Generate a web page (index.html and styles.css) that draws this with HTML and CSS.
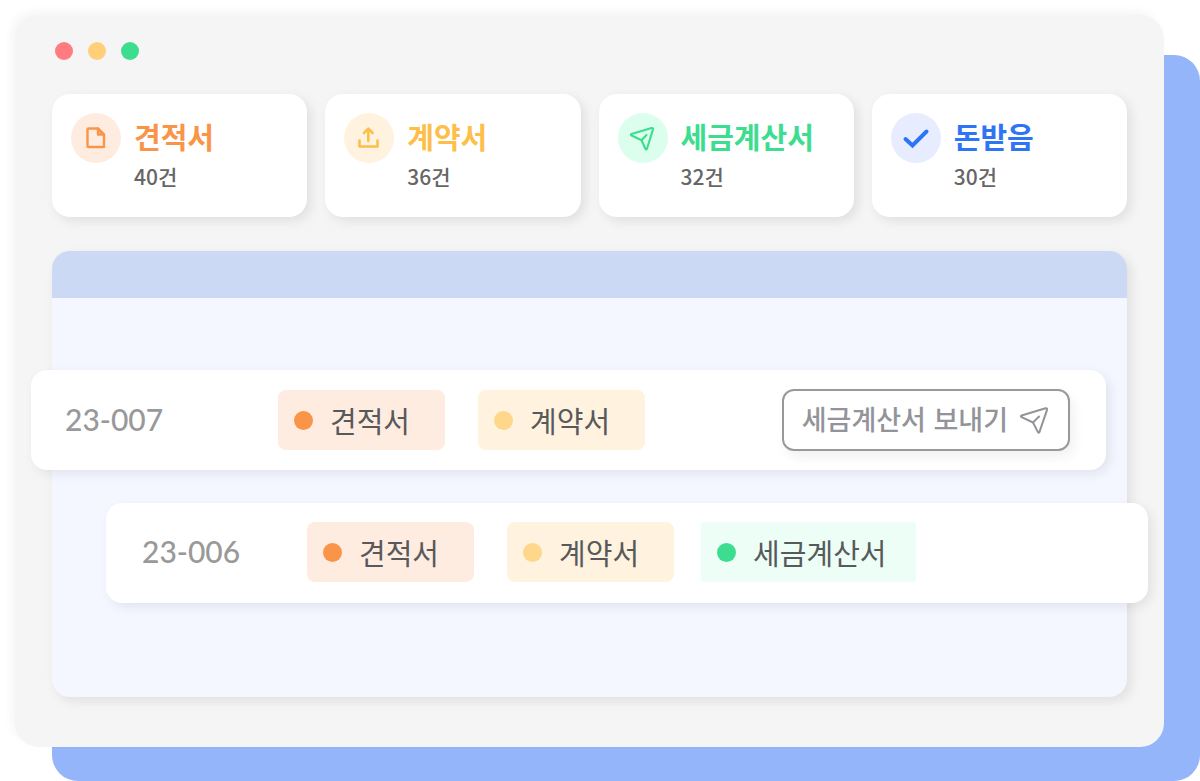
FILE: index.html
```
<!DOCTYPE html>
<html lang="ko">
<head>
  <meta charset="UTF-8" />
  <meta name="viewport" content="width=device-width, initial-scale=1.0"/>
  <title>세금계산서</title>
  <link rel="stylesheet" href="styles.css">
</head>
<body>

  <div class="stage">
    <main class="window">
      <div class="window-dots">
        <span class="red"></span>
        <span class="yellow"></span>
        <span class="green"></span>
      </div>

      <section class="cards">
        <article class="card orange">
          <div class="card-icon">
            <svg width="30" height="30" viewBox="0 0 30 30" fill="none" stroke="currentColor" stroke-width="2.4" stroke-linejoin="round">
              <path d="M7.500 5.500H17L23 11.500V24H7.500A1 1 0 0 1 6.500 23V6.500A1 1 0 0 1 7.500 5.500Z"/>
              <path d="M17 5.500V11.500H23Z" fill="currentColor" fill-opacity="0.4"/>
            </svg>
          </div>
          <div>
            <h2>견적서</h2>
            <p>40건</p>
          </div>
        </article>

        <article class="card yellow">
          <div class="card-icon">
            <svg width="30" height="30" viewBox="0 0 30 30" fill="none" stroke="currentColor" stroke-width="2.6" stroke-linecap="round" stroke-linejoin="round">
              <path d="M5.500 17.500V23.500H23.500V17.500"/>
              <path d="M14.300 18V6M10 10L14.300 5.700L18.600 10"/>
            </svg>
          </div>
          <div>
            <h2>계약서</h2>
            <p>36건</p>
          </div>
        </article>

        <article class="card green">
          <div class="card-icon">
            <svg width="30" height="30" viewBox="0 0 30 30" fill="none" stroke="currentColor" stroke-width="2.1" stroke-linecap="round" stroke-linejoin="round">
              <path d="M3.600 11L23.500 5.100Q25.400 4.700 24.900 6.600L19 25.800Q18.200 27.300 17.400 25.800L13.500 17.200L3.600 12.500Q2.200 11.600 3.600 11Z"/>
              <path d="M13.500 17.200L18.500 12"/>
            </svg>
          </div>
          <div>
            <h2>세금계산서</h2>
            <p>32건</p>
          </div>
        </article>

        <article class="card blue">
          <div class="card-icon">
            <svg width="30" height="30" viewBox="0 0 30 30" fill="none" stroke="currentColor" stroke-width="4" stroke-linecap="round">
              <path d="M4.500 16L11.500 22.500L25.500 8.500"/>
            </svg>
          </div>
          <div>
            <h2>돈받음</h2>
            <p>30건</p>
          </div>
        </article>
      </section>

      <section class="panel">
        <div class="panel-header"></div>
        <div class="panel-body">
          <div class="row row-left">
            <span class="number">23-007</span>
            <div class="tags">
              <span class="tag orange">견적서</span>
              <span class="tag yellow">계약서</span>
            </div>
            <button type="button" class="send">
              세금계산서 보내기
              <svg width="30" height="30" viewBox="0 0 30 30" fill="none" stroke="currentColor" stroke-width="2" stroke-linecap="round" stroke-linejoin="round">
                <path d="M2.600 11.500L26.500 4.300Q28.500 3.900 28 5.900L20.500 27.900Q19.600 29.500 18.800 27.900L14 18.500L2.600 13.100Q1.200 12.100 2.600 11.500Z"/>
                <path d="M14 18.500L20 12.500"/>
              </svg>
            </button>
          </div>

          <div class="row row-right">
            <span class="number">23-006</span>
            <div class="tags">
              <span class="tag orange">견적서</span>
              <span class="tag yellow">계약서</span>
              <span class="tag green">세금계산서</span>
            </div>
          </div>
        </div>
      </section>
    </main>
  </div>

</body>
</html>
```
FILE: styles.css
```
:root {
  --orange: #f99549;
  --yellow: #fdbf49;
  --green: #3ddd90;
  --blue: #2f74f5;
  --gray: #999999;
  --shadow: 4px 4px 12px rgba(0, 0, 0, 0.09);
}

* {
  box-sizing: border-box;
}

body {
  margin: 0;
  background-color: #fff;
  font-family: 'Noto Sans CJK KR', sans-serif;
}

h2, p {
  margin: 0;
}

svg {
  display: block;
  flex-shrink: 0;
}

.stage {
  position: relative;
  padding: 15px 36px 34px 15px;
}

/* blue sheet behind the window */
.stage::before {
  content: '';
  position: absolute;
  inset: 55px 0 0 52px;
  background-color: #95b5fa;
  border-radius: 26px;
}

.window {
  position: relative;
  padding: 27px 37px 50px;
  background-color: #f5f5f5;
  border-radius: 24px;
  box-shadow: -4px -4px 10px rgba(0, 0, 0, 0.04);
}

.window-dots {
  display: flex;
  gap: 15px;
  padding-left: 3px;
  margin-bottom: 34px;
}

.window-dots span {
  width: 18px;
  height: 18px;
  border-radius: 50%;
}

.window-dots .red { background-color: #ff7c7e; }
.window-dots .yellow { background-color: #ffd079; }
.window-dots .green { background-color: var(--green); }

.cards {
  display: grid;
  grid-template-columns: repeat(4, 1fr);
  gap: 18px;
  margin-bottom: 34px;
}

.card {
  display: flex;
  align-items: flex-start;
  gap: 13px;
  padding: 19px 19px 23px;
  background-color: #fff;
  border-radius: 18px;
  box-shadow: var(--shadow);
}

.card-icon {
  display: flex;
  align-items: center;
  justify-content: center;
  flex-shrink: 0;
  width: 50px;
  height: 50px;
  border-radius: 50%;
}

.card h2 {
  font-size: 29px;
  line-height: 46px;
  font-weight: 700;
  white-space: nowrap;
}

.card p {
  font-size: 21px;
  line-height: 35px;
  font-weight: 500;
  color: #666;
}

.card.orange { color: var(--orange); }
.card.yellow { color: var(--yellow); }
.card.green { color: var(--green); }
.card.blue { color: var(--blue); }

.card.orange .card-icon { background-color: #ffece1; }
.card.yellow .card-icon { background-color: #fff2df; }
.card.green .card-icon { background-color: #dcfeed; }
.card.blue .card-icon { background-color: #e7ecff; }

.panel {
  background-color: #f4f7ff;
  border-radius: 18px;
  box-shadow: var(--shadow);
}

.panel-header {
  height: 47px;
  background-color: #cbd9f4;
  border-radius: 18px 18px 0 0;
}

.panel-body {
  display: flex;
  flex-direction: column;
  gap: 33px;
  padding: 72px 0 94px;
}

.row {
  display: flex;
  align-items: center;
  padding: 19px 36px 21px;
  background-color: #fff;
  border-radius: 16px;
  box-shadow: 4px 4px 12px rgba(0, 0, 0, 0.08);
}

/* rows stick out of the panel on either side */
.row-left {
  margin: 0 21px 0 -21px;
  padding: 19px 36px 19px 34px;
}

.row-right {
  margin: 0 -21px 0 54px;
}

.number {
  width: 165px;
  padding-bottom: 2px;
  font-family: Lato, sans-serif;
  font-size: 30px;
  line-height: 30px;
  font-weight: 500;
  color: var(--gray);
}

.row-left .number {
  width: 213px;
}

.tags {
  display: flex;
  gap: 33px;
}

.tag {
  display: flex;
  align-items: center;
  gap: 17px;
  height: 60px;
  padding: 0 35px 0 16px;
  border-radius: 8px;
  font-size: 29px;
  line-height: 58px;
  color: #58595b;
}

.tag::before {
  content: '';
  width: 19px;
  height: 19px;
  border-radius: 50%;
}

.tag.orange { background-color: #ffece1; }
.tag.yellow { background-color: #fff2df; }
.tag.green {
  margin-left: -6px;
  padding-right: 29px;
  border-radius: 4px;
  background-color: #ecfef6;
}

.tag.orange::before { background-color: var(--orange); }
.tag.yellow::before { background-color: #ffd78a; }
.tag.green::before { background-color: var(--green); }

.send {
  display: flex;
  align-items: center;
  gap: 11px;
  height: 62px;
  margin-left: auto;
  padding: 0 19px 3px 18px;
  background-color: #fff;
  border: 2px solid var(--gray);
  border-radius: 12px;
  box-shadow: 4px 6px 12px rgba(0, 0, 0, 0.06);
  font-family: inherit;
  font-size: 27px;
  font-weight: 500;
  color: #929499;
  white-space: nowrap;
  cursor: pointer;
}
```
